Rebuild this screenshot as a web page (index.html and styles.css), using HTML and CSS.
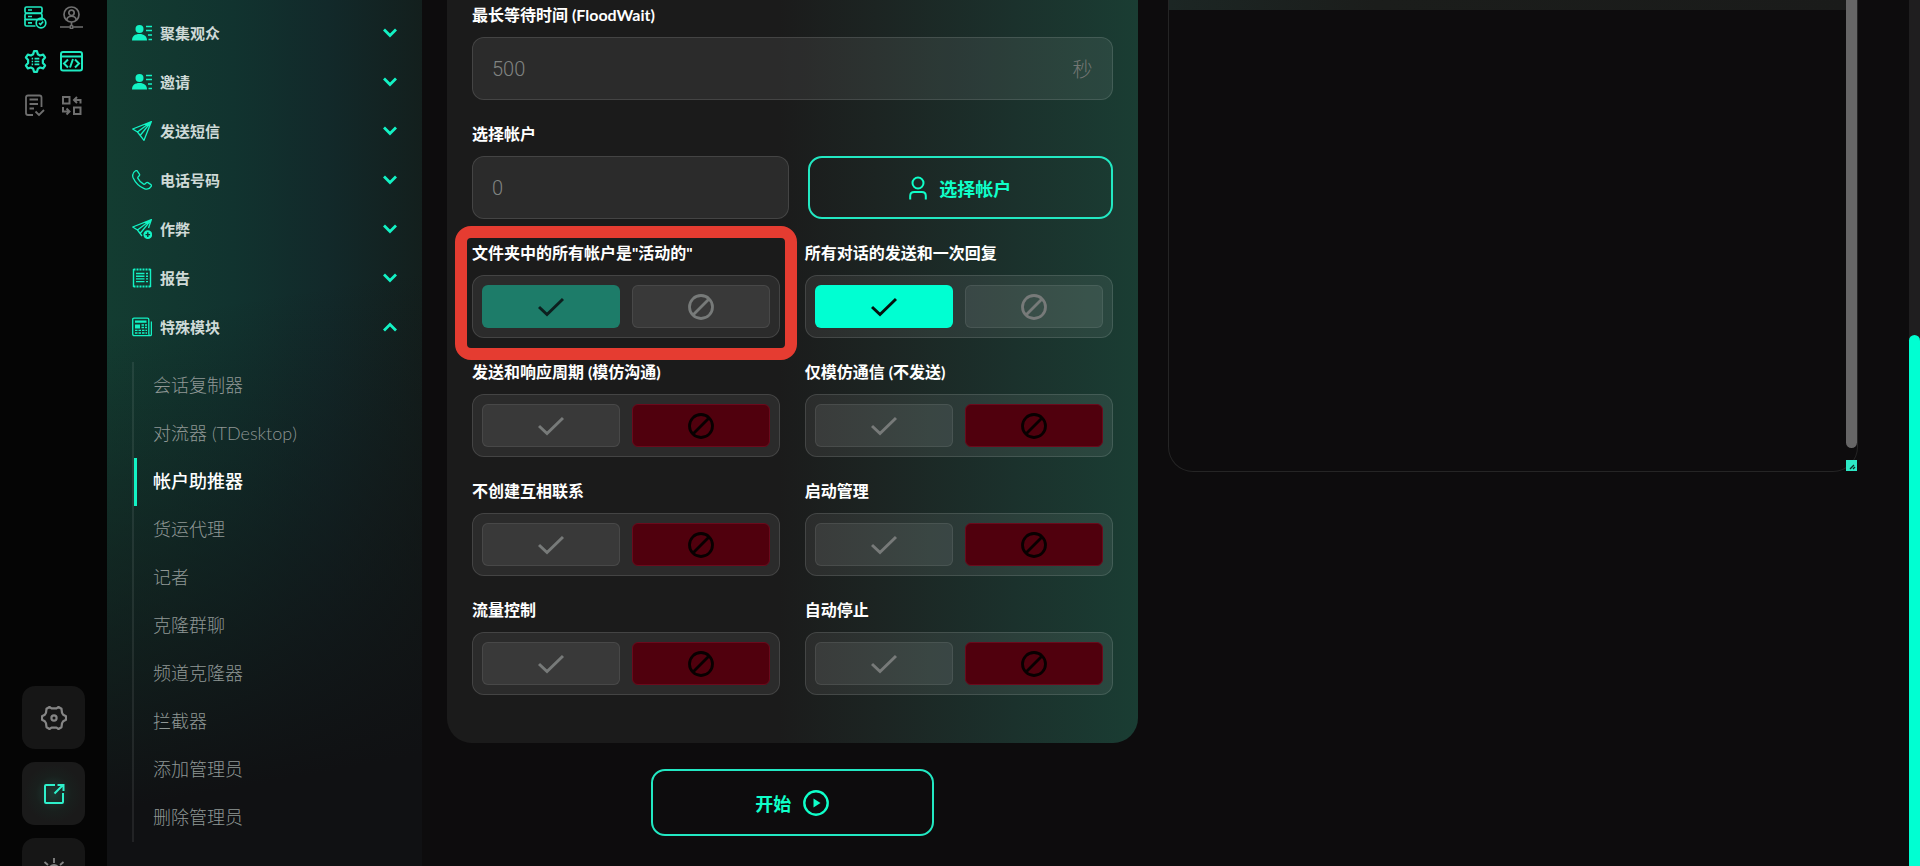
FILE: index.html
```
<!DOCTYPE html>
<html lang="zh-CN">
<head>
    <meta charset="UTF-8">
    <title>帐户助推器</title>
    <link rel="stylesheet" href="styles.css">
</head>
<body>
    <svg class="sprite" aria-hidden="true">
        <symbol id="i-down" viewBox="0 0 14 10"><path d="M1 1.500 7 7.500 13 1.500" fill="none" stroke="currentColor" stroke-width="2.800"/></symbol>
        <symbol id="i-up" viewBox="0 0 14 10"><path d="M1 8.500 7 2.500 13 8.500" fill="none" stroke="currentColor" stroke-width="2.800"/></symbol>
        <symbol id="i-people" viewBox="0 0 20 20"><circle cx="7.500" cy="6" r="4" fill="currentColor"/><path d="M0 17.500c0-4.500 3-6.500 7.500-6.500s7.500 2.200 7.500 6.500z" fill="currentColor"/><path d="M14 3.500h6M14 7.500h6M16 12h4M16.500 16.500h3.500" stroke="currentColor" stroke-width="1.400"/></symbol>
        <symbol id="i-plane" viewBox="0 0 20 20"><path d="M19.400.6.700 8l4.800 3L12 19.300z M19.400.6 5.500 11 M19.400.6 8.500 14" fill="none" stroke="currentColor" stroke-width="1.300" stroke-linejoin="round"/></symbol>
        <symbol id="i-plane-plus" viewBox="0 0 20 20"><path d="M10 17 5.500 11 .7 8 19.400.6 16.500 9 M19.400.6 5.500 11v0 M19.400.6 8.500 14" fill="none" stroke="currentColor" stroke-width="1.300" stroke-linejoin="round"/><circle cx="15.800" cy="15.600" r="4.400" fill="currentColor"/><path d="M15.800 13.300v4.600M13.500 15.600h4.600" stroke="#10342d" stroke-width="1.400"/></symbol>
        <symbol id="i-phone" viewBox="0 0 20 20"><path d="M3.600.8C4.300.3 5 .5 5.400 1.100l2 3c.4.600.3 1.200-.2 1.700L6.100 7c-.4.400-.4.900-.2 1.400 1.300 2.500 3.200 4.400 5.700 5.700.5.200 1 .2 1.400-.2l1.200-1.100c.5-.5 1.100-.6 1.700-.2l3 2c.6.400.8 1.100.3 1.800-1.500 2.600-4 3.400-7 2.200C6.700 16.300 3.700 13.300 1.100 7.700.1 5 1.200 2.300 3.600.8z" fill="none" stroke="currentColor" stroke-width="1.300"/></symbol>
        <symbol id="i-report" viewBox="0 0 20 20"><path d="M1.500 1v18M18.500 1v18" stroke="currentColor" stroke-width="1.400"/><path d="M1.500 1.500h17M1.500 18.500h17" stroke="currentColor" stroke-width="1.800" stroke-dasharray="2 1"/><path d="M4 5.500h8.500M4 8.200h8.500M4 10.900h8.500M4 13.600h8.500M14 5.500h2M14 8.200h2M14 10.900h2M14 13.600h2" stroke="currentColor" stroke-width="1.400"/></symbol>
        <symbol id="i-news" viewBox="0 0 20 20"><path d="M.7 17V2.500Q.7 1.200 2 1.200H15.500Q16.800 1.200 16.800 2.500V17Q17 18.700 18.300 18.700H2.400Q.7 18.700.7 17zM18.300 18.700Q19.400 18.600 19.400 17V4.500" fill="none" stroke="currentColor" stroke-width="1.300"/><path d="M3 3.500h11.500v2.200H3zM3 7.500h5v4H3z" fill="currentColor"/><path d="M9.500 8h5.500M9.500 10.500h5.500M3 13.300h12M3 16h12" stroke="currentColor" stroke-width="1.300" stroke-dasharray="2.500 1"/></symbol>
        <symbol id="i-check" viewBox="0 0 26 18"><path d="M1 9l8 7.500L25 1" fill="none" stroke="currentColor" stroke-width="3"/></symbol>
        <symbol id="i-ban" viewBox="0 0 26 26"><circle cx="13" cy="13" r="11.500" fill="none" stroke="currentColor" stroke-width="2.800"/><path d="M5 21 21 5" stroke="currentColor" stroke-width="2.800"/></symbol>
    </svg>

    <div class="app">
        <aside class="rail">
            <div class="rail-tabs">
                <button class="rail-tab on" aria-label="服务器">
                    <svg width="23" height="23" viewBox="0 0 23 23" fill="none" stroke="currentColor" stroke-width="1.700"><rect x="1" y="1" width="17" height="6" rx="1.500"/><rect x="1" y="7.500" width="17" height="6" rx="1.500"/><path d="M11.500 20H2.500Q1 20 1 18.500v-5h17v1"/><path d="M4 4h4M4 10.500h4M4 16.800h4"/><circle cx="17" cy="17" r="4.800"/><path d="M15 17l1.500 1.500 2.700-3"/></svg>
                </button>
                <button class="rail-tab" aria-label="代理">
                    <svg width="23" height="23" viewBox="0 0 23 23" fill="none" stroke="currentColor" stroke-width="1.700"><circle cx="11.500" cy="8.500" r="7.500"/><circle cx="11.500" cy="6.800" r="2.700"/><path d="M6.800 14c.4-5 9-5 9.400 0M11.500 16v3M0 21h9.500M13.500 21H23"/><circle cx="11.500" cy="21" r="1.500"/></svg>
                </button>
                <button class="rail-tab on" aria-label="设置">
                    <svg width="23" height="23" viewBox="0 0 24 24" fill="none" stroke="currentColor" stroke-width="2.300" stroke-linejoin="round"><path d="M9.500 4.500 10.500 1.200h3l1 3.300 2.200 1.200 3.300-.9 2 3-2.300 2.700v3l2.300 2.700-2 3-3.300-.9-2.200 1.200-1 3.300h-3l-1-3.300-2.200-1.200-3.300.9-2-3 2.300-2.700v-3L2 7.800l2-3 3.300.9z"/><path d="M8 9h1.500M11 9h5M8 12h1.500M11 12h5M8 15h1.500M11 15h5" stroke-width="1.800"/></svg>
                </button>
                <button class="rail-tab on" aria-label="代码">
                    <svg width="23" height="23" viewBox="0 0 23 23" fill="none" stroke="currentColor" stroke-width="2"><rect x="1" y="2" width="21" height="18.500" rx="2"/><path d="M1 6.500h21M8 9.500l-4 4 4 4M15 9.500l4 4-4 4M13 9l-3 8.500"/></svg>
                </button>
                <button class="rail-tab" aria-label="任务">
                    <svg width="23" height="23" viewBox="0 0 23 23" fill="none" stroke="currentColor" stroke-width="1.800"><path d="M9 21H4Q2 21 2 19V3.500Q2 1.500 4 1.500H15.500Q17.500 1.500 17.500 3.500V13M5.500 5.500H14M5.500 10H14M5.500 14.500H10M11.500 17.500l3.500 3.500 5-5"/></svg>
                </button>
                <button class="rail-tab" aria-label="转换">
                    <svg width="23" height="23" viewBox="0 0 23 23" fill="none" stroke="currentColor" stroke-width="2"><path d="M3 3h6.500v6.500H3zM14 13.500h6.500V20H14zM20.500 9.500V6H14M17 3l-3 3 3 3M3 13v4.500h6M6.500 14.500l3 3-3 3"/></svg>
                </button>
            </div>
            <div class="rail-tools">
                <button class="tool" aria-label="系统设置">
                    <svg width="26" height="26" viewBox="0 0 26 26" fill="none" stroke="currentColor" stroke-width="2.200" stroke-linejoin="round"><path d="M8.500 2 10.500 3.300h5L17.500 2l3 1.800.5 3.900 1.200 2 2.800 1.500v3.600l-2.800 1.500-1.200 2-.5 3.900-3 1.800-2-1.300h-5L8.500 24l-3-1.800L5 18.300l-1.200-2L1 14.800v-3.600l2.800-1.500 1.200-2 .5-3.900z"/><circle cx="13" cy="13" r="2.600"/></svg>
                </button>
                <button class="tool on" aria-label="在外部打开">
                    <svg width="22" height="22" viewBox="0 0 22 22" fill="none" stroke="currentColor" stroke-width="2"><path d="M12 2H3Q2 2 2 3V19Q2 20 3 20H19Q20 20 20 19V10M11.500 10.500 20 2M14.500 2H20.500V8"/></svg>
                </button>
                <button class="tool" aria-label="亮色模式">
                    <svg width="24" height="24" viewBox="0 0 24 24" fill="none" stroke="currentColor" stroke-width="1.800"><circle cx="12" cy="12" r="5"/><path d="M12 0v5M2.500 4l3.500 3M21.500 4 18 7M0 13h4M20 13h4M12 20v4"/></svg>
                </button>
            </div>
        </aside>

        <nav class="menu">
            <button class="menu-row"><svg class="menu-icon"><use href="#i-people"/></svg>聚集观众<svg class="arrow"><use href="#i-down"/></svg></button>
            <button class="menu-row"><svg class="menu-icon"><use href="#i-people"/></svg>邀请<svg class="arrow"><use href="#i-down"/></svg></button>
            <button class="menu-row"><svg class="menu-icon"><use href="#i-plane"/></svg>发送短信<svg class="arrow"><use href="#i-down"/></svg></button>
            <button class="menu-row"><svg class="menu-icon"><use href="#i-phone"/></svg>电话号码<svg class="arrow"><use href="#i-down"/></svg></button>
            <button class="menu-row"><svg class="menu-icon"><use href="#i-plane-plus"/></svg>作弊<svg class="arrow"><use href="#i-down"/></svg></button>
            <button class="menu-row"><svg class="menu-icon"><use href="#i-report"/></svg>报告<svg class="arrow"><use href="#i-down"/></svg></button>
            <button class="menu-row" aria-expanded="true"><svg class="menu-icon"><use href="#i-news"/></svg>特殊模块<svg class="arrow"><use href="#i-up"/></svg></button>
            <ul class="submenu">
                <li><a href="#">会话复制器</a></li>
                <li><a href="#">对流器 (TDesktop)</a></li>
                <li><a href="#" class="selected">帐户助推器</a></li>
                <li><a href="#">货运代理</a></li>
                <li><a href="#">记者</a></li>
                <li><a href="#">克隆群聊</a></li>
                <li><a href="#">频道克隆器</a></li>
                <li><a href="#">拦截器</a></li>
                <li><a href="#">添加管理员</a></li>
                <li><a href="#">删除管理员</a></li>
            </ul>
        </nav>

        <main class="content">
            <form class="settings">
                <div class="card">
                    <div class="field wide">
                        <label for="wait">最长等待时间 (FloodWait)</label>
                        <div class="box">
                            <input id="wait" type="text" placeholder="500">
                            <span class="unit">秒</span>
                        </div>
                    </div>
                    <div class="field wide">
                        <label for="accounts">选择帐户</label>
                        <div class="accounts">
                            <div class="box"><input id="accounts" type="text" placeholder="0"></div>
                            <button type="button" class="outline-btn">
                                <svg width="18" height="24" viewBox="0 0 18 24" fill="none" stroke="currentColor" stroke-width="2"><circle cx="9" cy="7" r="5.500"/><path d="M1.200 23.500V20q0-4 4-4h7.600q4 0 4 4v3.500"/></svg>
                                选择帐户
                            </button>
                        </div>
                    </div>
                    <div class="field marked">
                        <span class="label" id="t1">文件夹中的所有帐户是"活动的"</span>
                        <div class="toggle" role="group" aria-labelledby="t1">
                            <button type="button" class="yes on dim" aria-label="是"><svg><use href="#i-check"/></svg></button>
                            <button type="button" class="no" aria-label="否"><svg><use href="#i-ban"/></svg></button>
                        </div>
                    </div>
                    <div class="field">
                        <span class="label" id="t2">所有对话的发送和一次回复</span>
                        <div class="toggle" role="group" aria-labelledby="t2">
                            <button type="button" class="yes on" aria-label="是"><svg><use href="#i-check"/></svg></button>
                            <button type="button" class="no" aria-label="否"><svg><use href="#i-ban"/></svg></button>
                        </div>
                    </div>
                    <div class="field">
                        <span class="label" id="t3">发送和响应周期 (模仿沟通)</span>
                        <div class="toggle" role="group" aria-labelledby="t3">
                            <button type="button" class="yes" aria-label="是"><svg><use href="#i-check"/></svg></button>
                            <button type="button" class="no on" aria-label="否"><svg><use href="#i-ban"/></svg></button>
                        </div>
                    </div>
                    <div class="field">
                        <span class="label" id="t4">仅模仿通信 (不发送)</span>
                        <div class="toggle" role="group" aria-labelledby="t4">
                            <button type="button" class="yes" aria-label="是"><svg><use href="#i-check"/></svg></button>
                            <button type="button" class="no on" aria-label="否"><svg><use href="#i-ban"/></svg></button>
                        </div>
                    </div>
                    <div class="field">
                        <span class="label" id="t5">不创建互相联系</span>
                        <div class="toggle" role="group" aria-labelledby="t5">
                            <button type="button" class="yes" aria-label="是"><svg><use href="#i-check"/></svg></button>
                            <button type="button" class="no on" aria-label="否"><svg><use href="#i-ban"/></svg></button>
                        </div>
                    </div>
                    <div class="field">
                        <span class="label" id="t6">启动管理</span>
                        <div class="toggle" role="group" aria-labelledby="t6">
                            <button type="button" class="yes" aria-label="是"><svg><use href="#i-check"/></svg></button>
                            <button type="button" class="no on" aria-label="否"><svg><use href="#i-ban"/></svg></button>
                        </div>
                    </div>
                    <div class="field">
                        <span class="label" id="t7">流量控制</span>
                        <div class="toggle" role="group" aria-labelledby="t7">
                            <button type="button" class="yes" aria-label="是"><svg><use href="#i-check"/></svg></button>
                            <button type="button" class="no on" aria-label="否"><svg><use href="#i-ban"/></svg></button>
                        </div>
                    </div>
                    <div class="field">
                        <span class="label" id="t8">自动停止</span>
                        <div class="toggle" role="group" aria-labelledby="t8">
                            <button type="button" class="yes" aria-label="是"><svg><use href="#i-check"/></svg></button>
                            <button type="button" class="no on" aria-label="否"><svg><use href="#i-ban"/></svg></button>
                        </div>
                    </div>
                </div>
                <button type="button" class="outline-btn start">
                    开始
                    <svg width="26" height="26" viewBox="0 0 26 26"><circle cx="13" cy="13" r="11.700" fill="none" stroke="currentColor" stroke-width="2.400"/><path d="M10.500 8.500v9l7-4.500z" fill="currentColor"/></svg>
                </button>
            </form>

            <section class="log">
                <div class="log-head"></div>
                <div class="log-scroll"></div>
                <svg class="log-grip" viewBox="0 0 11 11"><path d="M4 9 8 5M7 9l2-2" stroke="#0d2a24" stroke-width="1.300"/></svg>
            </section>
        </main>

        <div class="page-scroll"><div class="thumb"></div></div>
    </div>
</body>
</html>
```
FILE: styles.css
```
*{
    box-sizing: border-box;
    margin: 0;
    padding: 0;
}
body{
    background: #0d0c0d;
    color: #fff;
    font-family: Lato, "Noto Sans CJK SC", sans-serif;
    font-size: 16px;
    overflow: hidden;
}
button, input{
    font: inherit;
    color: inherit;
    background: none;
    border: 0;
}
button{
    cursor: pointer;
}
ul{
    list-style: none;
}
svg{
    display: block;
    flex-shrink: 0;
}
.sprite{
    position: absolute;
    width: 0;
    height: 0;
}
.app{
    display: flex;
    height: 100vh;
    overflow: hidden;
}

/* icon rail */
.rail{
    flex: 0 0 107px;
    display: flex;
    flex-direction: column;
    justify-content: space-between;
    background: #050505;
}
.rail-tabs{
    display: grid;
    grid-template-columns: 23px 23px;
    gap: 21px 13px;
    justify-content: center;
    padding-top: 6px;
}
.rail-tab{
    color: #6f6f6f;
}
.rail-tab.on{
    color: #1fe9c1;
}
.rail-tools{
    display: flex;
    flex-direction: column;
    align-items: center;
    gap: 13px;
    margin-bottom: -35px;
}
.tool{
    display: flex;
    align-items: center;
    justify-content: center;
    width: 63px;
    height: 63px;
    border-radius: 13px;
    background: #161616;
    color: #858585;
}
.tool.on{
    color: #2ef0cb;
    background: radial-gradient(circle, #1d3a33 0, #191f1d 40%, #1a1a1a 65%);
}

/* menu */
.menu{
    flex: 0 0 315px;
    padding: 8px 25px 0;
    background:
        linear-gradient(170deg, rgba(16,17,19,0) 35%, #101113 88%),
        linear-gradient(90deg, #133c31 0, #11332f 40%, #12292a 70%, #131f1d 100%);
}
.menu-row{
    display: flex;
    align-items: center;
    width: 100%;
    height: 49px;
    color: #cfdad7;
    font-size: 15px;
    font-weight: bold;
}
.menu-icon{
    width: 20px;
    height: 20px;
    margin-right: 8px;
    color: #13f2c4;
}
.arrow{
    width: 14px;
    height: 10px;
    margin-left: auto;
    color: #13f2c4;
}
.submenu{
    margin-top: 11px;
    border-left: 2px solid rgba(255,255,255,0.08);
}
.submenu a{
    display: block;
    height: 48px;
    padding-left: 16px;
    border-left: 3px solid transparent;
    color: #8f9795;
    font-size: 18px;
    font-weight: 300;
    line-height: 46px;
    text-decoration: none;
}
.submenu .selected{
    border-color: #13f2c4;
    color: #fff;
    font-weight: 500;
}

/* content */
.content{
    flex: 1;
    display: grid;
    grid-template-columns: 1fr 1fr;
    gap: 30px;
    align-items: start;
    padding: 0 51px 0 25px;
}
.card{
    display: grid;
    grid-template-columns: 1fr 1fr;
    gap: 22px 25px;
    padding: 3px 25px 48px;
    border-radius: 0 0 25px 25px;
    background:
        linear-gradient(90deg, #1b1b1b 0, #1b1b1b 48%, #1c2422 62%, #1b312c 82%, #1a3d33 100%);
}
.field{
    position: relative;
}
.wide{
    grid-column: span 2;
}
.field label, .label{
    display: block;
    height: 24px;
    margin-bottom: 10px;
    font-weight: bold;
    line-height: 24px;
    white-space: nowrap;
}
.box{
    display: flex;
    align-items: center;
    height: 63px;
    padding: 0 19px;
    border: 1px solid rgba(255,255,255,0.12);
    border-radius: 12px;
    background: rgba(255,255,255,0.07);
    color: #747775;
    font-size: 20px;
    font-weight: 300;
}
.box input{
    flex: 1;
    min-width: 0;
    height: 100%;
    outline: none;
    font-family: Roboto, "Noto Sans CJK SC", sans-serif;
}
.box input::placeholder{
    color: #808381;
}
.accounts{
    display: grid;
    grid-template-columns: 26fr 25fr;
    gap: 19px;
}
.outline-btn{
    display: flex;
    align-items: center;
    justify-content: center;
    gap: 12px;
    border: 2px solid #22e8c2;
    border-radius: 14px;
    color: #0fffc9;
    font-size: 18px;
    font-weight: bold;
}
.start{
    width: 41%;
    height: 67px;
    margin: 26px auto 0;
}
.toggle{
    display: grid;
    grid-template-columns: 1fr 1fr;
    gap: 12px;
    height: 63px;
    padding: 9px;
    border: 1px solid rgba(255,255,255,0.12);
    border-radius: 12px;
    background: rgba(255,255,255,0.07);
}
.toggle button{
    display: flex;
    align-items: center;
    justify-content: center;
    border: 1px solid rgba(255,255,255,0.08);
    border-radius: 6px;
    background: rgba(255,255,255,0.07);
    color: #777a79;
}
.toggle svg{
    width: 26px;
    height: 26px;
}
.toggle .yes.on{
    border-color: transparent;
    background: #00ffd2;
    color: #04110e;
}
.toggle .yes.dim{
    background: #1d7c69;
    color: #0d1f1e;
}
.toggle .no.on{
    border-color: #6b0a1c;
    background: #50000d;
    color: #080001;
}

/* highlight frame around the field */
.marked::after{
    content: "";
    position: absolute;
    top: -15px;
    right: -17px;
    bottom: -22px;
    left: -17px;
    border: 12px solid #e53c31;
    border-radius: 16px;
    pointer-events: none;
}

/* log panel */
.log{
    position: relative;
    height: 472px;
    border: 1px solid #252525;
    border-top: 0;
    border-radius: 0 0 25px 25px;
}
.log-head{
    height: 10px;
    background: linear-gradient(90deg, #1c2624 0, #1b1d1b 30%, #1a1b1a 100%);
}
.log-scroll{
    position: absolute;
    top: 0;
    right: 0;
    bottom: 23px;
    width: 11px;
    border-radius: 0 0 6px 6px;
    background: #666;
}
.log-grip{
    position: absolute;
    right: 0;
    bottom: 0;
    width: 11px;
    height: 11px;
    background: #2de8c5;
}
.page-scroll{
    flex: 0 0 11px;
    display: flex;
    align-items: flex-end;
    background: #1f1e1f;
}
.thumb{
    width: 11px;
    height: calc(100vh - 335px);
    border-radius: 6px 6px 0 0;
    background: #00ffd2;
}
```
